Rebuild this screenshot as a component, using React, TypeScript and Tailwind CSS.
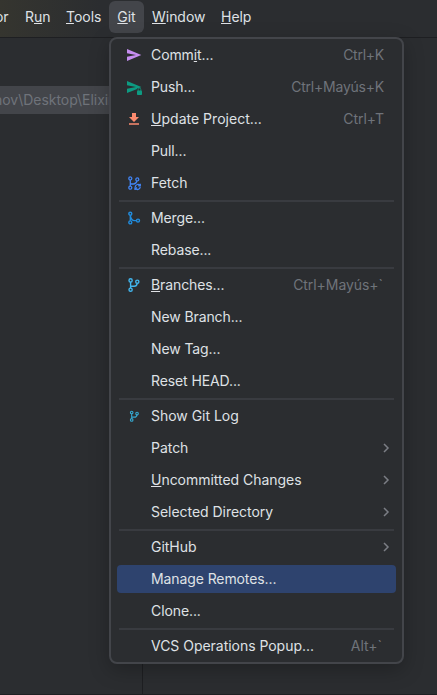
import React from 'react';

type IconName = 'commit' | 'push' | 'update' | 'fetch' | 'merge' | 'branches' | 'log';

interface Item {
  label: string;
  mnemonic?: number;
  shortcut?: string;
  shortcutClass?: string;
  icon?: IconName;
  submenu?: boolean;
  selected?: boolean;
}

const groups: Item[][] = [
  [
    { label: 'Commit...', mnemonic: 4, shortcut: 'Ctrl+K', shortcutClass: 'tracking-[-0.25px]', icon: 'commit' },
    { label: 'Push...', shortcut: 'Ctrl+Mayús+K', shortcutClass: 'tracking-[-0.22px]', icon: 'push' },
    { label: 'Update Project...', mnemonic: 0, shortcut: 'Ctrl+T', icon: 'update' },
    { label: 'Pull...' },
    { label: 'Fetch', icon: 'fetch' },
  ],
  [{ label: 'Merge...', icon: 'merge' }, { label: 'Rebase...' }],
  [
    {
      label: 'Branches...',
      mnemonic: 0,
      shortcut: 'Ctrl+Mayús+`',
      shortcutClass: 'pr-px tracking-[-0.06px]',
      icon: 'branches',
    },
    { label: 'New Branch...' },
    { label: 'New Tag...' },
    { label: 'Reset HEAD...' },
  ],
  [
    { label: 'Show Git Log', icon: 'log' },
    { label: 'Patch', submenu: true },
    { label: 'Uncommitted Changes', mnemonic: 0, submenu: true },
    { label: 'Selected Directory', submenu: true },
  ],
  [{ label: 'GitHub', submenu: true }, { label: 'Manage Remotes...', selected: true }, { label: 'Clone...' }],
  [{ label: 'VCS Operations Popup...', shortcut: 'Alt+`', shortcutClass: 'pr-0.5' }],
];

function Branch({ color }: { color: string }) {
  return (
    <g stroke={color} strokeWidth="1.4" fill="none">
      <circle cx="4.6" cy="3.4" r="1.6" />
      <circle cx="4.6" cy="12.7" r="1.6" />
      <circle cx="11.3" cy="4.7" r="1.6" />
      <path d="M4.6 5v6M4.6 9.2H8.2Q10.8 9.2 11.2 6.3" />
    </g>
  );
}

function Icon({ name }: { name?: IconName }) {
  return (
    <svg className="mr-[9px] size-4 shrink-0" viewBox="0 0 16 16" fill="none">
      {name === 'commit' && <path d="M1 2 15.3 8 1 14V9.7L10 8 1 6.3Z" fill="#c58df0" />}
      {name === 'push' && (
        <>
          <path d="M1 2 15.3 8 14 8.7Q11 8.6 10.6 10.2L1 14V9.7L10 8 1 6.3Z" fill="#0d9b82" />
          <rect x="11" y="11.5" width="5" height="4.5" rx=".8" fill="#0d9b82" />
          <path d="M12.2 12v-1.5a1.3 1.3 0 0 1 2.6 0V12" stroke="#0d9b82" strokeWidth=".8" />
        </>
      )}
      {name === 'update' && (
        <path d="M6 2h4v4h3L8 11 3 6h3ZM3 12.2h10v1.6H3Z" fill="#fc8b6f" />
      )}
      {name === 'fetch' && (
        <g stroke="#4184f3" strokeWidth="1.3">
          <circle cx="4.3" cy="3.4" r="1.5" />
          <circle cx="4.3" cy="12.7" r="1.5" />
          <circle cx="11.3" cy="4.4" r="1.5" />
          <path d="M4.3 5v6M4.3 9H7.5Q10 8.8 11 6M14 10.4Q12.8 9 11.2 9.5 9.3 10.2 9.2 12M9.4 13.4Q10.8 15 12.7 14.2 14.2 13.4 14.2 12M14.3 8.8v2.1H12.2M9 15v-2.1h2.1" />
        </g>
      )}
      {name === 'merge' && (
        <g stroke="#218cdd" strokeWidth="1.4">
          <circle cx="4.3" cy="3.8" r="1.5" />
          <circle cx="4.3" cy="12.4" r="1.5" />
          <circle cx="12" cy="10.6" r="1.5" />
          <path d="M4.3 5.4v5.4M4.4 6.2Q5.6 10.6 8.4 10.6h2" />
        </g>
      )}
      {name === 'branches' && <Branch color="#42b6ee" />}
      {name === 'log' && (
        <g transform="translate(2 1.8) scale(.8)">
          <Branch color="#36a8d0" />
        </g>
      )}
    </svg>
  );
}

function Label({ text, mnemonic }: { text: string; mnemonic?: number }) {
  if (mnemonic === undefined) return <span>{text}</span>;
  return (
    <span className="whitespace-pre">
      {text.slice(0, mnemonic)}
      <span className="underline decoration-1 underline-offset-[1px] [text-decoration-skip-ink:none]">
        {text[mnemonic]}
      </span>
      {text.slice(mnemonic + 1)}
    </span>
  );
}

function Row({ item }: { item: Item }) {
  const tracking = item.label.endsWith('...') && item.label.length < 18 ? 'tracking-[-0.1px]' : '';
  return (
    <div
      className={`mx-1.5 my-0.5 flex h-7 items-center rounded pl-[9px] ${
        item.selected ? 'bg-[#2e436e]' : ''
      } ${item.submenu ? 'pr-1.5' : 'pr-3'}`}
    >
      <Icon name={item.icon} />
      <span className={item.label.startsWith('Update') ? 'tracking-[0.02px]' : tracking}>
        <Label text={item.label} mnemonic={item.mnemonic} />
      </span>
      {item.shortcut && (
        <span className={`ml-auto text-[#6f737a] ${item.shortcutClass ?? ''}`}>{item.shortcut}</span>
      )}
      {item.submenu && (
        <svg className="ml-auto h-3 w-2" viewBox="0 0 8 12" fill="none">
          <path d="m2 2 4 4-4 4" stroke="#7b7e85" strokeWidth="1.5" />
        </svg>
      )}
    </div>
  );
}

export default function App() {
  return (
    <div className="relative flex h-[695px] w-[437px] flex-col overflow-hidden bg-[#2b2d30] font-['Inter',sans-serif] text-[14px] leading-5 tracking-[-0.03px] text-[#dfe1e5] [font-feature-settings:'calt'_0]">
      <header className="flex h-[38px] shrink-0 items-start border-b border-[#1e1f22] bg-linear-to-r from-[#35352f] to-[#2b2d30] to-[100px] pt-px">
        <nav className="-ml-[5px] flex h-8 items-center">
          <span className="w-[30px]">or</span>
          <span className="w-[41px]"><Label text="Run" mnemonic={1} /></span>
          <span className="w-[43px]"><Label text="Tools" mnemonic={0} /></span>
          <span className="flex h-8 w-[35px] items-center justify-center rounded-md bg-[#43454a]">
            <Label text="Git" mnemonic={0} />
          </span>
          <span className="ml-2 w-[69px]"><Label text="Window" mnemonic={0} /></span>
          <span><Label text="Help" mnemonic={0} /></span>
        </nav>
      </header>
      <main className="flex flex-1 border-b border-[#1e1f22]">
        <aside className="w-[143px] border-r border-[#1e1f22] pt-12">
          <div className="flex h-7 items-center overflow-hidden whitespace-nowrap bg-[#43454a] text-[#6f737a]">
            <span className="-ml-[6px]">nov\Desktop\Elixir</span>
          </div>
        </aside>
        <section className="flex-1" />
      </main>
      <div className="absolute left-[109px] top-[37px] w-[295px] rounded-lg border-2 border-[#43454a] bg-[#2b2d30] shadow-[0_6px_20px_rgba(0,0,0,0.25)]">
        {groups.map((group, g) => (
          <div key={g} className="flow-root">
            {g > 0 && <div className="mx-2 mt-px h-0.5 bg-[#393b40]" />}
            {group.map((item) => (
              <div key={item.label} className="flow-root">
                <Row item={item} />
              </div>
            ))}
          </div>
        ))}
      </div>
    </div>
  );
}
